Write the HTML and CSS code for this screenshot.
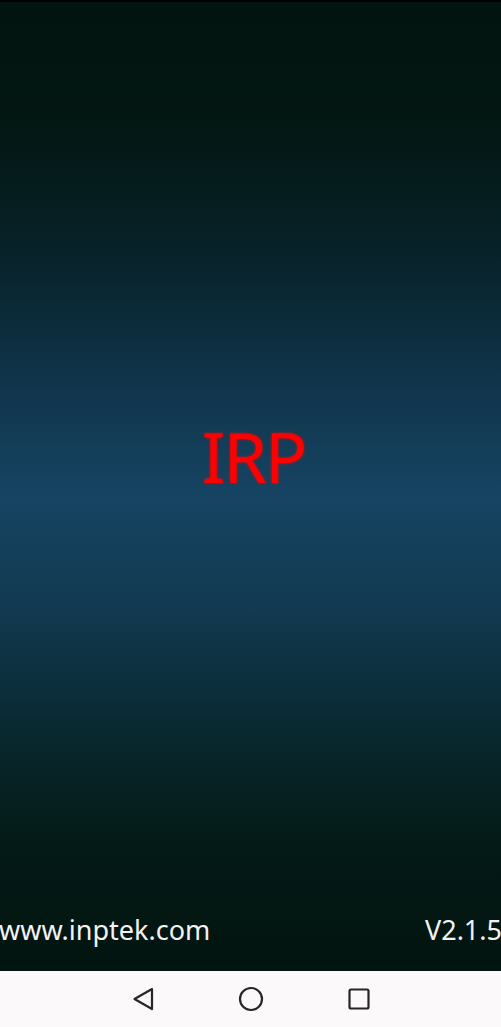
FILE: index.html
```
<!DOCTYPE html>
<html lang="en">
<head>
  <meta charset="UTF-8">
  <title>IRP</title>
  <link rel="stylesheet" href="styles.css">
</head>
<body>

<div class="screen">
  <div class="splash">
    <div class="title">IRP</div>
    <div class="footer">
      <span class="site">www.inptek.com</span>
      <span class="version">V2.1.5</span>
    </div>
  </div>

  <div class="navbar">
    <svg class="nav-icon" width="24" height="24" viewBox="0 0 24 24">
      <path d="M21 2 L3.5 12 L21 22 Z" fill="none" stroke="#262626" stroke-width="2.2" stroke-linejoin="round"/>
    </svg>
    <svg class="nav-icon" width="26" height="26" viewBox="0 0 26 26">
      <circle cx="13" cy="13" r="11" fill="none" stroke="#262626" stroke-width="2.2"/>
    </svg>
    <svg class="nav-icon" width="24" height="24" viewBox="0 0 24 24">
      <rect x="2.5" y="2.5" width="19" height="19" rx="1.5" fill="none" stroke="#262626" stroke-width="2.2"/>
    </svg>
  </div>
</div>

</body>
</html>
```

FILE: styles.css
```
html, body { margin: 0; padding: 0; }
body { font-family: "Noto Sans", "Open Sans", sans-serif; background: #fbf9fa; }

.screen { display: flex; flex-direction: column; height: 1027px; width: 501px; overflow: hidden; }

.splash {
  height: 969px;
  border-top: 2px solid #000;
  display: flex;
  flex-direction: column;
  background: linear-gradient(to bottom,
    #021410 0%, #031712 12%, #08222a 26%, #10344a 39%, #164463 51%,
    #123a52 62%, #0a2a33 74%, #041a16 87%, #021410 100%);
}

.title {
  margin-top: 419px;
  text-align: center;
  font-size: 70px;
  letter-spacing: -2px;
  line-height: 1;
  color: #ff0000;
  text-shadow: 0 0 3px rgba(255, 0, 0, 0.8);
  padding-left: 6px;
}

.footer {
  margin-top: auto;
  margin-bottom: 28px;
  display: flex;
  justify-content: space-between;
  font-size: 27px;
  line-height: 1;
  color: #f2f2f2;
}
.site { margin-left: -1px; }
.version { margin-right: -1px; }

.navbar {
  flex: 1;
  display: flex;
  justify-content: center;
  align-items: center;
  gap: 83px;
  background: #fbf9fa;
}
.nav-icon { display: block; }
```
